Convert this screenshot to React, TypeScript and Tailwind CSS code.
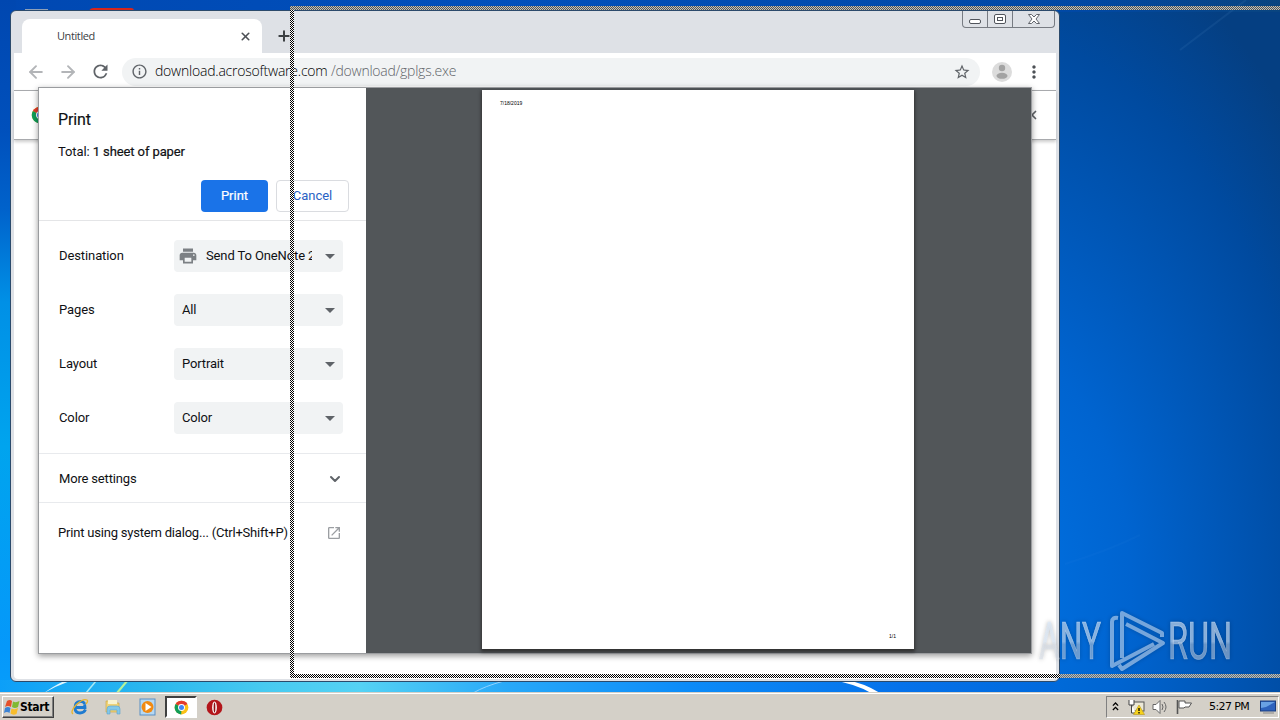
import type { ReactNode } from 'react'
import { ArrowLeft, ArrowRight, ChevronDown, Plus, X } from 'lucide-react'
import {
    MdInfoOutline,
    MdMoreVert,
    MdOpenInNew,
    MdPrint,
    MdRefresh,
    MdStarBorder,
} from 'react-icons/md'

function ChromeLogo({ className }: { className?: string }) {
    return (
        <svg viewBox="0 0 48 48" className={className}>
            <circle cx="24" cy="24" r="22" fill="#fbc116" />
            <path d="M24 24 L5 13 A22 22 0 0 1 43 13 Z" fill="#e33b2e" />
            <path d="M24 24 L5 13 A22 22 0 0 0 23 46 Z" fill="#109d58" />
            <circle cx="24" cy="24" r="11" fill="#fff" />
            <circle cx="24" cy="24" r="8" fill="#4285f4" />
        </svg>
    )
}

function Wallpaper() {
    return (
        <div className="absolute inset-0 bg-[radial-gradient(ellipse_420px_700px_at_980px_590px,#0074e6,#0064d0_36%,#004a9f_80%,#053f82)]">
            <div className="absolute inset-x-0 top-0 h-3 bg-[linear-gradient(90deg,#0048b2,#0050bc_40%,#0048a4_85%,#09447f)]" />
            <div className="absolute left-0 top-0 h-full w-4 bg-[linear-gradient(180deg,#0047b0,#0050bc_18%,#0062cb_29%,#0090e6_42%,#00a4ee_62%,#0598fa_90%,#08a0fa)]" />
            <div className="absolute left-0 top-[680px] h-[14px] w-[1060px] bg-[linear-gradient(90deg,#0c9ff8,#2db9ee_15%,#48caf0_25%,#55d2f4_34%,#28a8f8_48%,#0c8bf8_65%,#0672ea_85%,#0069dc)]" />
            <svg viewBox="0 0 1280 720" className="absolute inset-0 size-full">
                <path d="M44 693 Q56 686 70 681 L64 681 Q52 687 44 693Z" fill="#dff6ff" />
                <path d="M117 693 L127 681" stroke="#b8f29a" strokeWidth="2" />
                <path d="M86 693 L96 681" stroke="#a8e8f4" strokeWidth="1.5" />
                <path d="M473 693 Q485 686 504 681" stroke="#8fd2ff" fill="none" />
                <path d="M832 680 Q856 684 871 693 L880 693 Q864 683 846 680Z" fill="#fff" />
                <path d="M1180 50 L1246 0" stroke="#6aa2d8" strokeWidth="2" opacity=".1" />
                <path d="M1065 564 Q1110 550 1140 535" stroke="#6ab0ff" strokeWidth="2" fill="none" opacity=".04" />
                <rect x="25" y="9" width="23" height="2" fill="#8ea0b8" />
                <path d="M89 11 Q90 8 94 8 H131 Q134 8 134 11Z" fill="#d8261c" />
            </svg>
        </div>
    )
}

function WindowButtons() {
    return (
        <div className="flex h-[17px] w-[93px] divide-x divide-[#777b82] rounded-b-[4px] border border-t-0 border-[#777b82]">
            <div className="flex w-[25px] items-center justify-center">
                <div className="mt-[4px] h-[5px] w-3 rounded-[2px] border border-[#51555c] bg-white" />
            </div>
            <div className="flex w-[25px] items-center justify-center">
                <div className="flex h-[10px] w-3 items-center justify-center rounded-[2px] border border-[#51555c] bg-white">
                    <div className="h-1 w-[6px] border border-[#51555c]" />
                </div>
            </div>
            <div className="flex flex-1 items-center justify-center">
                <svg viewBox="0 0 12 10" className="h-[10px] w-3">
                    <path
                        d="M.5 .5H3.5L6 3L8.500 .5H11.500L8 5L11.500 9.500H8.500L6 7L3.500 9.500H.5L4 5Z"
                        fill="#fff"
                        stroke="#51555c"
                        strokeWidth=".9"
                    />
                </svg>
            </div>
        </div>
    )
}

function TabStrip() {
    return (
        <div className="flex h-[41px] items-start">
            <div className="ml-[8px] mt-[7px] flex h-[34px] w-[240px] items-center rounded-t-lg bg-white pl-[35px] pr-[10px]">
                <span className="flex-1 font-['Open_Sans'] text-[11px] tracking-[-0.4px] text-[#3c4043]">Untitled</span>
                <X className="size-[13px] text-[#4d5156]" strokeWidth={3} />
            </div>
            <Plus className="ml-[14px] mt-[16px] size-4 text-[#3c4043]" strokeWidth={3} />
            <div className="-mt-px ml-auto mr-[1px]">
                <WindowButtons />
            </div>
        </div>
    )
}

function Toolbar() {
    return (
        <div className="flex h-[37px] items-center bg-white pl-[12px]">
            <ArrowLeft className="size-[20px] text-[#b3b5b8]" strokeWidth={2.3} />
            <ArrowRight className="ml-3 size-[20px] text-[#b3b5b8]" strokeWidth={2.3} />
            <MdRefresh className="ml-[12px] size-[21px] text-[#5f6368]" />
            <div className="ml-[11px] flex h-7 w-[858px] items-center rounded-full bg-[#f1f3f4] px-[9px]">
                <MdInfoOutline className="size-[17px] text-[#5f6368]" />
                <div className="mb-[2px] ml-[7px] flex-1 whitespace-nowrap font-['Open_Sans'] text-[14px] font-light leading-none text-black">
                    <span className="inline-block w-[176px] tracking-[-0.22px]">download.acrosoftware.com</span>
                    <span className="tracking-[-0.25px] text-[#5f6368]">/download/gplgs.exe</span>
                </div>
                <MdStarBorder className="size-[18px] text-[#5f6368]" />
            </div>
            <svg viewBox="0 0 20 20" className="ml-[12px] size-5">
                <circle cx="10" cy="10" r="10" fill="#dcdcdc" />
                <circle cx="10" cy="6" r="3.200" fill="#a3a3a3" />
                <ellipse cx="10" cy="13.800" rx="5.500" ry="3" fill="#a3a3a3" />
            </svg>
            <MdMoreVert className="ml-[12px] size-5 text-[#4d5156]" />
        </div>
    )
}

function Select({ children, icon }: { children: ReactNode; icon?: ReactNode }) {
    return (
        <div className="flex h-8 w-[169px] items-center rounded bg-[#f1f3f4] pr-2">
            {icon}
            <span className={icon ? 'ml-[8px] w-[106px] overflow-hidden whitespace-nowrap tracking-[-0.12px]' : 'ml-2 flex-1 tracking-[-0.15px]'}>
                {children}
            </span>
            <div className="ml-auto border-x-[5px] border-t-[5px] border-x-transparent border-t-[#5f6368]" />
        </div>
    )
}

const settings = [
    { label: 'Destination', value: 'Send To OneNote 2', printer: true },
    { label: 'Pages', value: 'All' },
    { label: 'Layout', value: 'Portrait' },
    { label: 'Color', value: 'Color' },
]

function PrintDialog() {
    return (
        <div className="absolute left-[27px] top-[76px] flex h-[567px] w-[994px] border border-[#9a9c9f] bg-white font-[Roboto,sans-serif] text-[13px] text-[#101114] shadow-[0_2px_6px_rgba(0,0,0,.4)]">
            <div className="flex w-[327px] flex-col">
                <div className="flex h-[133px] flex-col border-b border-[#e4e5e7]">
                    <h1 className="mt-[20px] pl-[19px] text-[16px] leading-6 tracking-[-0.1px] [-webkit-text-stroke:0.15px]">Print</h1>
                    <p className="mt-[10px] pl-[19px] leading-5 tracking-[-0.1px]">
                        Total: <span className="[-webkit-text-stroke:0.2px]">1 sheet of paper</span>
                    </p>
                    <div className="mt-[18px] flex justify-end gap-2 pr-[17px]">
                        <button className="h-8 w-[67px] rounded bg-[#1a73e8] text-white [-webkit-text-stroke:0.2px]">Print</button>
                        <button className="h-8 w-[73px] rounded border border-[#dadce0] text-[#2a62c4]">Cancel</button>
                    </div>
                </div>
                <div className="flex h-[233px] flex-col gap-[22px] border-b border-[#e8eaed] pt-[19px]">
                    {settings.map((row) => (
                        <div key={row.label} className="flex items-center pl-[20px]">
                            <span className="w-[115px] tracking-[-0.1px]">{row.label}</span>
                            <Select icon={row.printer && <MdPrint className="ml-[4px] size-[20px] text-[#7c8084]" />}>
                                {row.value}
                            </Select>
                        </div>
                    ))}
                </div>
                <div className="flex h-[49px] items-center justify-between border-b border-[#e8eaed] pl-[20px] pr-[23px] pt-px">
                    <span className="tracking-[-0.17px]">More settings</span>
                    <ChevronDown className="size-4 text-[#5f6368]" strokeWidth={3} />
                </div>
                <div className="flex h-[60px] items-center justify-between pl-[19px] pr-[24px]">
                    <span className="whitespace-nowrap tracking-[-0.2px]">Print using system dialog... (Ctrl+Shift+P)</span>
                    <MdOpenInNew className="size-4 text-[#9b9ea2]" />
                </div>
            </div>
            <div className="flex flex-1 justify-center bg-[#525659]">
                <div className="mr-[1px] mt-[2px] flex h-[559px] w-[432px] flex-col justify-between bg-white px-[18px] pb-[9px] pt-[10px] font-['Liberation_Sans'] text-[5px] leading-[7px] text-black shadow-[0_2px_3px_1px_#333]">
                    <span>7/18/2019</span>
                    <span className="text-right">1/1</span>
                </div>
            </div>
        </div>
    )
}

function BrowserWindow() {
    return (
        <div className="absolute left-[10px] top-[10px] flex h-[672px] w-[1050px] flex-col rounded-md border border-[#2b4a6b] bg-[#dee1e6] px-[3px] pb-[2px] pt-px">
            <TabStrip />
            <Toolbar />
            <div className="relative z-0 flex h-[50px] items-center justify-between border-y border-[#a8aaad] bg-white pl-[17px] pr-[17px] shadow-[0_2px_3px_rgba(0,0,0,.2)]">
                <ChromeLogo className="size-[18px]" />
                <X className="size-[14px] text-[#5f6368]" strokeWidth={3} />
            </div>
            <div className="flex-1 rounded-b-sm bg-white" />
            <PrintDialog />
        </div>
    )
}

// rubber-band rectangle shown while the window is being dragged
function DragOutline() {
    return (
        <div className="pointer-events-none absolute inset-0">
            <div className="absolute left-[290px] right-0 top-[6px] h-1 bg-[conic-gradient(#d0c2a2_25%,#41546f_0_50%,#d0c2a2_0_75%,#41546f_0)] bg-[length:2px_2px]" />
            <div className="absolute left-[290px] top-[10px] h-[664px] w-1 bg-[conic-gradient(#fff_25%,#000_0_50%,#fff_0_75%,#000_0)] bg-[length:2px_2px]" />
            <div className="absolute left-[290px] top-[674px] h-1 w-[770px] bg-[conic-gradient(#fff_25%,#000_0_50%,#fff_0_75%,#000_0)] bg-[length:2px_2px]" />
            <div className="absolute left-[1060px] right-0 top-[674px] h-1 bg-[conic-gradient(#d0c2a2_25%,#4a6a94_0_50%,#d0c2a2_0_75%,#4a6a94_0)] bg-[length:2px_2px]" />
        </div>
    )
}

function Watermark() {
    return (
        <svg viewBox="0 0 200 72" className="absolute left-[1035px] top-[604px] h-[72px] w-[200px] overflow-visible drop-shadow-[0_0_2px_rgba(0,0,0,.35)]">
            <defs>
                <linearGradient id="mark" x1="0" y1="0" x2="0" y2="1">
                    <stop offset="0.5" stopColor="#dbe9f9" stopOpacity=".62" />
                    <stop offset="0.55" stopColor="#d5dde8" stopOpacity=".5" />
                </linearGradient>
            </defs>
            <g fill="url(#mark)" stroke="url(#mark)" strokeWidth=".6" fontFamily="Roboto, sans-serif" fontSize="51">
                <text x="4" y="55" textLength="62" lengthAdjust="spacingAndGlyphs">ANY</text>
                <text x="133" y="55" textLength="64" lengthAdjust="spacingAndGlyphs">RUN</text>
            </g>
            <g fill="none" stroke="#c4dcf6" strokeOpacity=".6" strokeWidth="4" strokeLinejoin="round">
                <path d="M83 14 Q77 13 77 18 V62 L119 40" />
                <path d="M87 54 V9 L127 29 V33" />
                <path d="M91 20 L128 39 L87 65 L84 61" />
            </g>
        </svg>
    )
}

function WindowsFlag() {
    return (
        <svg viewBox="0 0 16 16" className="size-4">
            <path d="M3 2 Q6 0 8 2 L7 8 Q4 6 1 8Z" fill="#e5502a" />
            <path d="M9 2.500 Q12 4 15.500 2 L14 8 Q11 10 8 8Z" fill="#80b933" />
            <path d="M1 9 Q4 7 6.500 9 L5.500 14 Q3 12 0 14Z" fill="#3c83d4" />
            <path d="M7.500 9.500 Q11 11 14 9 L12.500 15 Q9 16.500 6.500 14.500Z" fill="#f8bd2c" />
        </svg>
    )
}

function QuickLaunch() {
    return (
        <div className="ml-[17px] flex items-center">
            <svg viewBox="0 0 18 18" className="size-[18px]">
                <path d="M14 6 Q12 3 9 3.500 Q4 4 4 9.500 Q4 15 9 15 Q13 15 14.500 11.500 M5 9.500 H14 Q14 8 13.500 6.500" fill="none" stroke="#1f7bd0" strokeWidth="2.800" />
                <path d="M2 16 Q-1 14 5 7 Q12 0 16 2 Q17.500 3 15 6" fill="none" stroke="#eab52c" strokeWidth="1.300" />
            </svg>
            <svg viewBox="0 0 18 18" className="ml-[15px] size-[18px]">
                <path d="M2 3 H8 L9 5 H15 V14 H2Z" fill="#efd377" stroke="#c9a33c" strokeWidth=".6" />
                <path d="M4 2 H13 V6 H4Z" fill="#f9f3cf" />
                <path d="M3 16 V11 Q3 8 6 8 H13 Q16 8 16 11 V16 H13 V12 H6 V16Z" fill="#83c8e8" stroke="#5aa2cd" strokeWidth=".6" />
            </svg>
            <svg viewBox="0 0 18 18" className="ml-[17px] size-[18px]">
                <rect x="1" y="1" width="15" height="16" fill="#b5d8f3" stroke="#5a8fc3" />
                <circle cx="8.500" cy="9" r="6" fill="#f18a12" />
                <path d="M6.500 5 V13 L12.500 9Z" fill="#fff" />
            </svg>
            <div className="ml-[8px] flex h-[22px] w-[32px] items-center justify-center border-2 border-b-white border-l-[#404040] border-r-white border-t-[#404040] bg-white">
                <ChromeLogo className="size-[15px]" />
            </div>
            <svg viewBox="0 0 18 18" className="ml-[9px] size-[17px]">
                <circle cx="9" cy="9" r="8.300" fill="#b3161b" />
                <ellipse cx="9" cy="9" rx="2.500" ry="6.300" fill="#fff" />
                <ellipse cx="9" cy="9" rx=".9" ry="5.400" fill="#8c1014" />
            </svg>
        </div>
    )
}

function Tray() {
    return (
        <div className="ml-auto mr-[1px] flex h-[22px] w-[173px] items-center border border-b-white border-l-[#808080] border-r-white border-t-[#808080]">
            <svg viewBox="0 0 8 10" className="mb-[2px] ml-[5px] h-[9px] w-[7px]" fill="none" stroke="#000" strokeWidth="1.500">
                <path d="M1 4 L4 1 L7 4 M1 9 L4 6 L7 9" />
            </svg>
            <svg viewBox="0 0 17 16" className="ml-[9px] h-4 w-[17px]">
                <rect x="4" y="3" width="12" height="9" fill="#ece9d8" stroke="#555" />
                <path d="M1 1 V6 H6 V1 M3.500 6 V14 H8" fill="#fff" stroke="#444" />
                <path d="M11 6 L16.500 15.500 H5.500Z" fill="#f6d21c" stroke="#b5951b" strokeWidth=".6" />
                <path d="M11 9 V12 M11 13 V14.500" stroke="#000" strokeWidth="1.300" />
            </svg>
            <svg viewBox="0 0 17 16" className="ml-[7px] h-4 w-[17px]" fill="#fff" stroke="#666">
                <path d="M1 5.500 H4 L8 1.500 V14.500 L4 10.500 H1Z" />
                <path d="M10 5 Q12 8 10 11 M12 3 Q16 8 12 13" fill="none" />
            </svg>
            <svg viewBox="0 0 17 16" className="ml-[7px] h-4 w-[17px]" fill="#fff" stroke="#555">
                <path d="M1.500 1 V15" strokeWidth="1.600" />
                <path d="M3 2 H9 V4 H15.500 L13 8 H9 L8 9 H3Z" />
            </svg>
            <span className="ml-[16px] whitespace-nowrap font-['DejaVu_Sans'] text-[11px] tracking-[-0.6px] text-black">5:27 PM</span>
            <svg viewBox="0 0 16 14" className="ml-auto mr-[2px] h-[14px] w-4">
                <rect x=".5" y="1" width="15" height="10" fill="#2d62bd" stroke="#1a3c7d" />
                <path d="M1 2 H15 L6 7 L1 8Z" fill="#69a1e4" />
                <path d="M3 13 H14" stroke="#888" />
            </svg>
        </div>
    )
}

function Taskbar() {
    return (
        <div className="relative mt-auto flex h-[28px] items-center border-t border-[#d4d0c8] bg-[#d4d0c8] pl-[2px] pt-px shadow-[inset_0_1px_0_#fff]">
            <button className="flex h-[22px] w-[52px] items-center border border-b-[#404040] border-l-white border-r-[#404040] border-t-white pl-px font-['DejaVu_Sans_Condensed','DejaVu_Sans'] text-[12px] font-bold tracking-[-0.35px] text-black shadow-[inset_-1px_-1px_0_#808080]">
                <WindowsFlag />
                <span>Start</span>
            </button>
            <QuickLaunch />
            <Tray />
        </div>
    )
}

export default function App() {
    return (
        <div className="relative flex h-[720px] w-[1280px] flex-col overflow-hidden bg-[#0060cc]">
            <Wallpaper />
            <BrowserWindow />
            <DragOutline />
            <Watermark />
            <Taskbar />
        </div>
    )
}
